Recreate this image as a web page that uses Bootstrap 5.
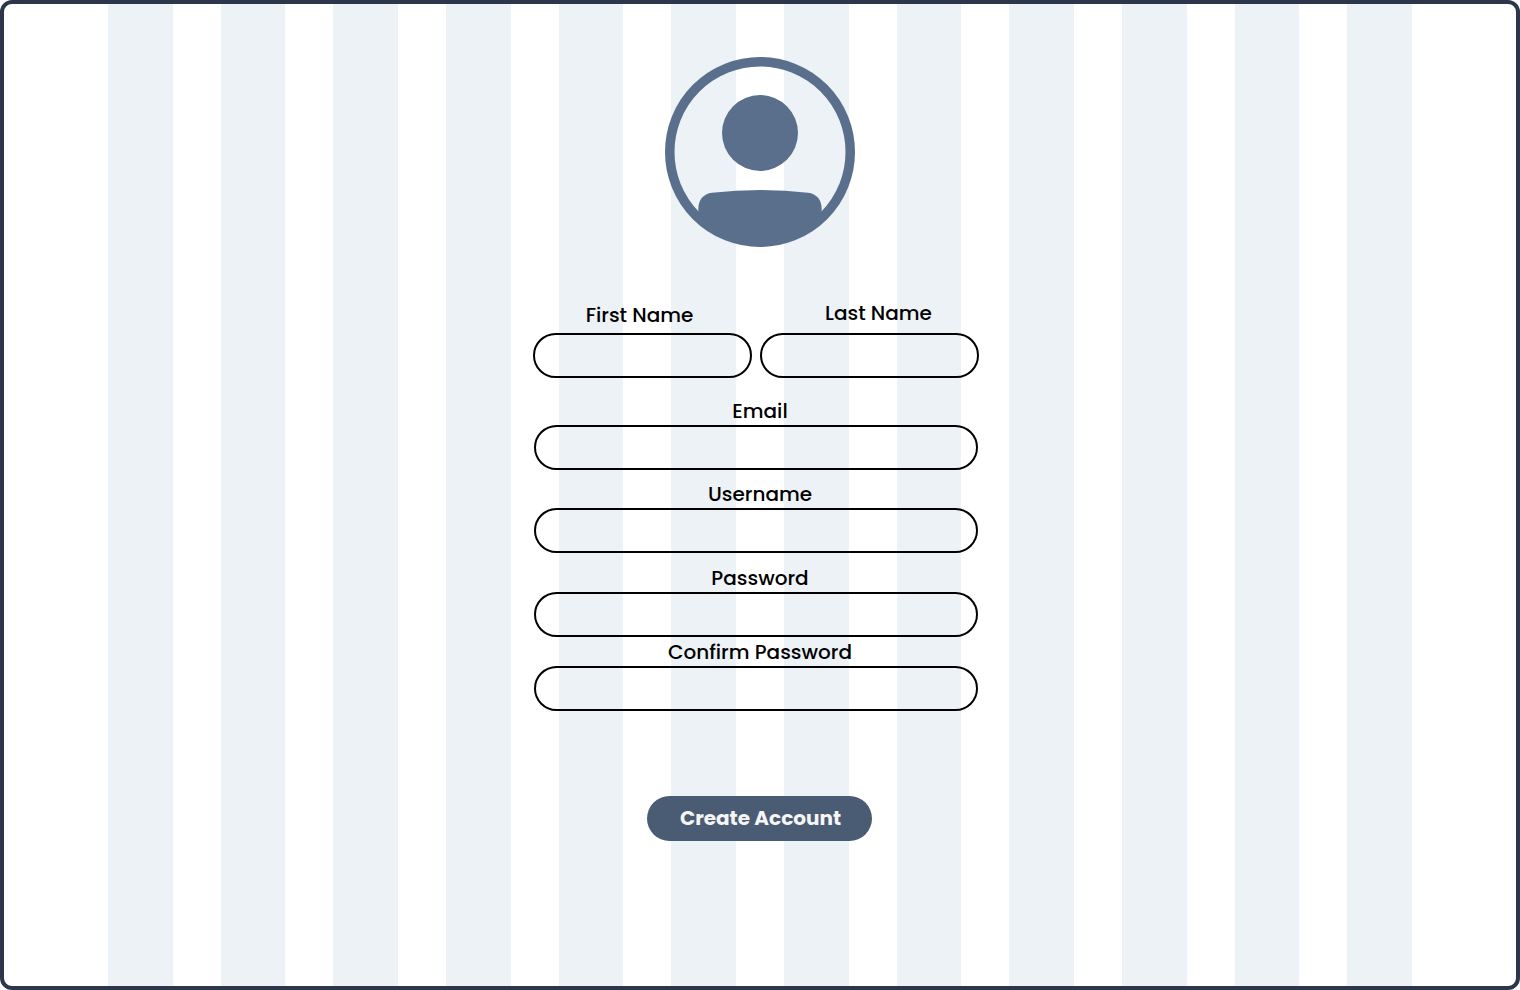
<!DOCTYPE html>
<html lang="en">
<head>
<meta charset="utf-8">
<meta name="viewport" content="width=device-width, initial-scale=1">
<title>Create Account</title>
<link href="https://cdn.jsdelivr.net/npm/bootstrap@5.3.0/dist/css/bootstrap.min.css" rel="stylesheet">
<style>
  body { font-family: Poppins, Inter, sans-serif; color: #000; }
  .page-frame {
    height: 990px;
    border: 4px solid #2d374b;
    border-radius: 12px;
    /* twelve stripes separated by 48px gutters */
    background: repeating-linear-gradient(90deg, #edf2f6 0 64.667px, #fff 64.667px 112.667px) 104px 0 / 1304px 100% no-repeat;
  }
  .avatar { width: 190px; height: 190px; margin-top: 53px; color: #596f8c; }
  .signup { width: 446px; margin: 56px 8px 0 0; }
  .form-label { font-size: 20px; font-weight: 500; line-height: 20px; margin: 0 0 4px; white-space: nowrap; }
  .pill { height: 45px; border: 2px solid #000; border-radius: 23px; background: transparent; padding: 0 20px; }
  .field { width: 444px; margin-top: 14px; }
  .field .form-label { padding-left: 8px; }
  .field-email { margin-top: 23px; }
  .field-password { margin-top: 15px; }
  .field-confirm { margin-top: 5px; }
  .first .form-label { margin: 2px 0 8px; padding-right: 6px; }
  .last .form-label { margin-bottom: 10px; padding-left: 18px; }
  .btn-create {
    --bs-btn-color: #f5f5f5; --bs-btn-bg: #4a5c74;
    --bs-btn-hover-color: #fff; --bs-btn-hover-bg: #596f8c;
    width: 225px; height: 45px; margin: 85px 1px 0 0; padding: 0 0 0 2px; border: 0;
    font-size: 20px; font-weight: 700; line-height: 45px;
  }
</style>
</head>
<body>
<main class="page-frame d-flex flex-column align-items-center overflow-hidden">
  <svg class="avatar flex-shrink-0" viewBox="0 0 190 190" role="img" aria-label="Profile">
    <circle cx="95" cy="95" r="90.25" fill="none" stroke="currentColor" stroke-width="9.5"/>
    <circle cx="95" cy="76" r="38" fill="currentColor"/>
    <path fill="currentColor" d="M33.7 156.5 C31.8 145 37 137 47 135.8 Q95 130.2 143 135.8 C153 137 158.2 145 156.3 156.5 A87 87 0 0 1 33.7 156.5Z"/>
  </svg>
  <form class="signup d-flex flex-column align-items-center">
    <div class="d-flex gap-2 w-100">
      <div class="first flex-fill text-center">
        <label class="form-label d-block" for="first">First Name</label>
        <input class="pill d-block w-100" id="first" type="text">
      </div>
      <div class="last flex-fill text-center">
        <label class="form-label d-block" for="last">Last Name</label>
        <input class="pill d-block w-100" id="last" type="text">
      </div>
    </div>
    <div class="field field-email text-center">
      <label class="form-label d-block" for="email">Email</label>
      <input class="pill d-block w-100" id="email" type="email">
    </div>
    <div class="field field-user text-center">
      <label class="form-label d-block" for="user">Username</label>
      <input class="pill d-block w-100" id="user" type="text">
    </div>
    <div class="field field-password text-center">
      <label class="form-label d-block" for="password">Password</label>
      <input class="pill d-block w-100" id="password" type="password">
    </div>
    <div class="field field-confirm text-center">
      <label class="form-label d-block" for="confirm">Confirm Password</label>
      <input class="pill d-block w-100" id="confirm" type="password">
    </div>
  </form>
  <button class="btn btn-create rounded-pill" type="button">Create Account</button>
</main>
<script src="https://cdn.jsdelivr.net/npm/bootstrap@5.3.0/dist/js/bootstrap.bundle.min.js"></script>
</body>
</html>
